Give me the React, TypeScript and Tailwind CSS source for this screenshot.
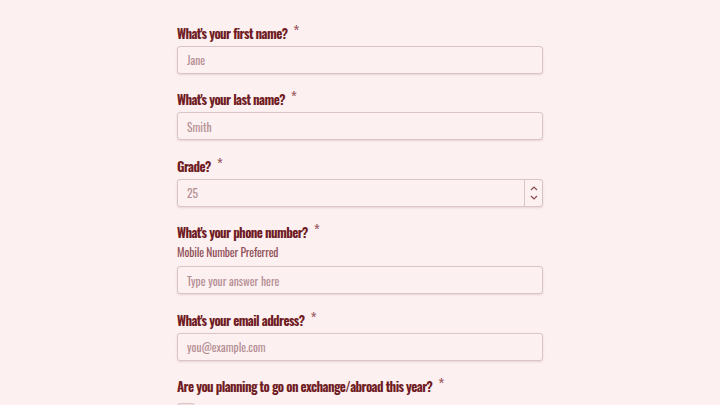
function Label({ text, sub }: { text: string; sub?: string }) {
  return (
    <div>
      <div className="flex items-start text-[13px] leading-[16px] font-bold tracking-[-0.6px] text-[#701c24]">
        <span>{text}</span>
        <span className="ml-[6px] -mt-[2px] text-[15px] leading-[14px] font-normal text-[#9a5a60]">*</span>
      </div>
      {sub && <div className="mt-[4px] text-[11.5px] leading-[16px] font-normal tracking-[-0.15px] text-[#8f5158]">{sub}</div>}
    </div>
  );
}

function Field({ placeholder }: { placeholder: string }) {
  return (
    <input
      placeholder={placeholder}
      className="w-full h-[28px] rounded-[3px] border border-[#d9c4c6] bg-[#fdf0f1] px-[9px] font-['Oswald',sans-serif] text-[11.5px] font-normal placeholder-[#b48f94] shadow-[0_1px_2px_rgba(120,60,60,0.15)] outline-none"
    />
  );
}

export default function App() {
  return (
    <div className="w-[720px] h-[405px] overflow-hidden bg-[#fdf0f0] font-['Oswald',sans-serif]">
      <div className="ml-[177px] w-[366px] pt-[25px] flex flex-col">
        <div className="flex flex-col gap-[4.5px]">
          <Label text="What's your first name?" />
          <Field placeholder="Jane" />
        </div>
        <div className="mt-[17.5px] flex flex-col gap-[5px]">
          <Label text="What's your last name?" />
          <Field placeholder="Smith" />
        </div>
        <div className="mt-[17.5px] flex flex-col gap-[5px]">
          <Label text="Grade?" />
          <div className="flex h-[28px] rounded-[3px] border border-[#d9c4c6] bg-[#fdf0f1] shadow-[0_1px_2px_rgba(120,60,60,0.15)]">
            <div className="flex-1 px-[9px] flex items-center text-[11.5px] text-[#b48f94]">25</div>
            <div className="w-[18px] border-l border-[#d9c4c6] flex flex-col items-center justify-center gap-[4px]">
              <svg width="8" height="5" viewBox="0 0 8 5" fill="none" stroke="#8a4a50" strokeWidth="1.2"><path d="M1 4L4 1L7 4" /></svg>
              <svg width="8" height="5" viewBox="0 0 8 5" fill="none" stroke="#8a4a50" strokeWidth="1.2"><path d="M1 1L4 4L7 1" /></svg>
            </div>
          </div>
        </div>
        <div className="mt-[17.5px] flex flex-col gap-[6px]">
          <Label text="What's your phone number?" sub="Mobile Number Preferred" />
          <Field placeholder="Type your answer here" />
        </div>
        <div className="mt-[17.5px] flex flex-col gap-[5px]">
          <Label text="What's your email address?" />
          <Field placeholder="you@example.com" />
        </div>
        <div className="mt-[17.5px] flex flex-col gap-[9px]">
          <Label text="Are you planning to go on exchange/abroad this year?" />
          <div className="w-[18px] h-[18px] rounded-[3px] border border-[#d9c4c6] bg-[#f7dfe1]" />
        </div>
      </div>
    </div>
  );
}
